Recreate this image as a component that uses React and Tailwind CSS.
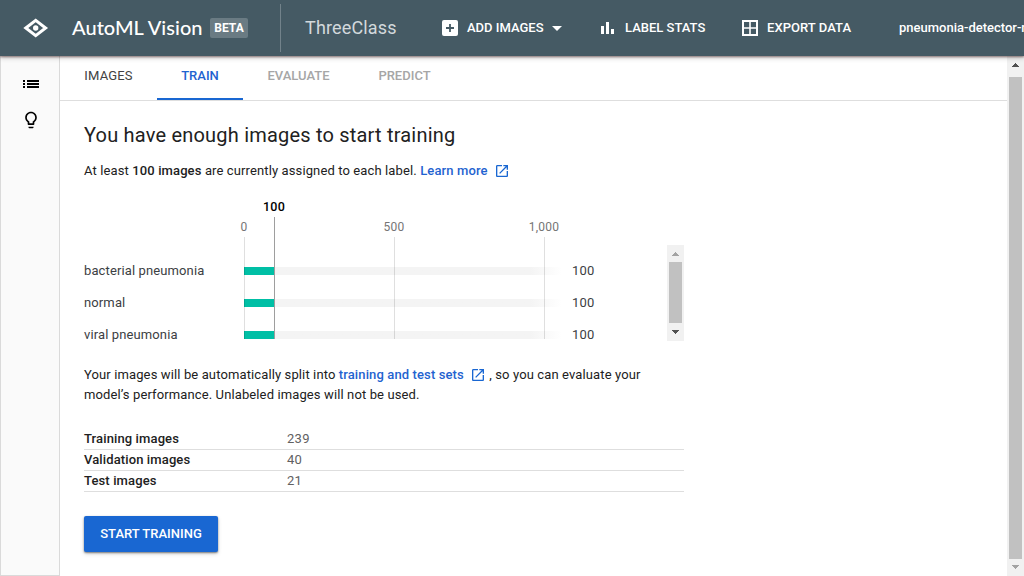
const labels = [
  { name: "bacterial pneumonia", count: "100" },
  { name: "normal", count: "100" },
  { name: "viral pneumonia", count: "100" },
];

const splits = [
  { name: "Training images", count: "239" },
  { name: "Validation images", count: "40" },
  { name: "Test images", count: "21" },
];

function Icon({ d, className }) {
  return (
    <svg viewBox="0 0 24 24" fill="currentColor" className={className}>
      <path d={d} />
    </svg>
  );
}

const OPEN =
  "M19 19H5V5h7V3H5c-1.11 0-2 .9-2 2v14c0 1.1.89 2 2 2h14c1.1 0 2-.9 2-2v-7h-2v7zM14 3v2h3.59l-9.83 9.83 1.41 1.41L19 6.41V10h2V3h-7z";

function Link({ children }) {
  return (
    <a className="font-medium text-[#1f63d0]">
      {children}
      <Icon d={OPEN} className="ml-[6px] inline-block size-4 align-[-4px] text-[#1967d2]" />
    </a>
  );
}

function Arrow({ down, className }) {
  return (
    <svg viewBox="0 0 7 4" fill="currentColor" shapeRendering="crispEdges" className={`h-1 w-[7px] ${className}`}>
      <path d={down ? "M0 0h7v1H6v1H5v1H4v1H3V3H2V2H1V1H0z" : "M3 0h1v1h1v1h1v1h1v1H0V3h1V2h1V1h1z"} />
    </svg>
  );
}

function Header() {
  return (
    <header className="relative z-10 flex h-14 shrink-0 items-center bg-[#455a64] text-white shadow-[0_1px_2px_rgba(60,20,20,0.5),0_2px_5px_rgba(0,0,0,0.2)]">
      <svg viewBox="0 0 26 20" className="ml-[23px] h-5 w-[26px] shrink-0">
        <path d="M2.8 10 12.7 2.4 22.6 10l-9.9 7.6z" fill="none" stroke="currentColor" strokeWidth="3" />
        <circle cx="12.7" cy="10" r="2.7" fill="currentColor" />
      </svg>
      <h1 className="ml-[23px] w-[138px] shrink-0 pb-[2px] font-['Lato'] text-[20px] leading-6 font-medium tracking-[0.03px] whitespace-nowrap">AutoML Vision</h1>
      <span className="flex h-5 w-[38px] shrink-0 items-center justify-center rounded-[2px] bg-[#6a7b83] text-[12px] font-bold">BETA</span>
      <div className="ml-8 h-12 w-px shrink-0 bg-[#72828a]" />
      <span className="ml-6 w-[136px] shrink-0 pb-px text-[18px] tracking-[0.15px] text-[#d3d9dc]">ThreeClass</span>
      <svg viewBox="0 0 16 16" className="ml-px size-4 shrink-0">
        <rect width="16" height="16" rx="2" fill="currentColor" />
        <path d="M4 8h8M8 4v8" stroke="#455a64" strokeWidth="1.8" />
      </svg>
      <span className="ml-[9px] w-[85px] shrink-0 text-[13px] font-medium whitespace-nowrap">ADD IMAGES</span>
      <svg viewBox="0 0 10 5" className="mt-px h-[5px] w-[10px] shrink-0" fill="currentColor">
        <path d="M0 0h10L5 5z" />
      </svg>
      <svg viewBox="0 0 13 12" fill="currentColor" className="ml-[39px] h-3 w-[13px] shrink-0">
        <path d="M0 4h3v8H0zM5 0h3v12H5zM10 7h3v5h-3z" />
      </svg>
      <span className="ml-[11px] w-[117px] shrink-0 text-[13px] font-medium whitespace-nowrap">LABEL STATS</span>
      <svg viewBox="0 0 16 16" className="size-4 shrink-0" fill="none" stroke="currentColor">
        <path d="M1 1h14v14H1z" strokeWidth="2" />
        <path d="M8 1v14M1 8h14" strokeWidth="1.6" />
      </svg>
      <span className="ml-[9px] w-[132px] shrink-0 text-[13px] font-medium tracking-[0.05px] whitespace-nowrap">EXPORT DATA</span>
      <span className="min-w-0 flex-1 overflow-hidden text-[13px] font-medium whitespace-nowrap">pneumonia-detector-ml</span>
    </header>
  );
}

function Chart() {
  return (
    <div className="relative mt-4 h-[146px] w-[600px] text-[12px] leading-5 tracking-[0.2px]">
      <div className="ml-[160px] flex h-5">
        <span className="w-[60px] text-center text-[12.5px] font-medium text-black">100</span>
      </div>
      <div className="ml-[130px] flex h-5 text-[#757575]">
        <span className="w-[60px] text-center">0</span>
        <span className="ml-[90px] w-[60px] text-center">500</span>
        <span className="ml-[90px] w-[60px] text-center">1,000</span>
      </div>
      <div className="mt-2 flex h-[96px] justify-between">
        <div className="flex flex-col pt-[10px]">
          {labels.map((l) => (
            <div key={l.name} className="flex h-8 shrink-0 items-center text-[13px] text-[#3c4043]">
              <span className="w-40 tracking-[0.12px]">{l.name}</span>
              <div className="flex h-2 w-[318px] bg-linear-to-r from-[#f4f4f4] from-90% to-white">
                <div className="w-[30px] bg-[#00bfa5]" />
              </div>
              <span className="ml-[10px]">{l.count}</span>
            </div>
          ))}
        </div>
        <div className="flex w-[17px] flex-col items-center bg-[#f1f1f1]">
          <Arrow className="mt-[7px] text-[#a3a3a3]" />
          <div className="mt-[6px] h-[61px] w-[13px] bg-[#c1c1c1]" />
          <Arrow down className="mt-[7px] text-[#505050]" />
        </div>
      </div>
      <div className="absolute top-10 left-40 h-[102px] w-px bg-[#00000020]" />
      <div className="absolute top-10 left-[310px] h-[102px] w-px bg-[#00000020]" />
      <div className="absolute top-10 left-[460px] h-[102px] w-px bg-[#00000020]" />
      <div className="absolute top-5 left-[190px] h-[122px] w-px bg-[#9e9e9e]" />
    </div>
  );
}

export default function App() {
  return (
    <div className="flex h-[576px] w-[1024px] flex-col overflow-hidden bg-white font-['Roboto',sans-serif] text-[#212121]">
      <Header />
      <div className="flex min-h-0 flex-1">
        <aside className="flex w-[60px] shrink-0 flex-col items-center border-x border-b border-[#dadada] bg-[#fafafa] pt-[18px] text-black">
          <svg viewBox="0 0 16 8" fill="currentColor" shapeRendering="crispEdges" className="mt-[6px] ml-[2px] h-2 w-4">
            <path d="M0 0h2v2H0zM4 0h12v2H4zM0 3h2v2H0zM4 3h12v2H4zM0 6h2v2H0zM4 6h12v2H4z" />
          </svg>
          <Icon
            className="mt-[22px] ml-[2px] size-5"
            d="M9 21c0 .55.45 1 1 1h4c.55 0 1-.45 1-1v-1H9v1zm3-19C8.14 2 5 5.14 5 9c0 2.38 1.19 4.47 3 5.74V17c0 .55.45 1 1 1h6c.55 0 1-.45 1-1v-2.26c1.81-1.27 3-3.36 3-5.74 0-3.86-3.14-7-7-7zm2.85 11.1-.85.6V16h-4v-2.3l-.85-.6C7.8 12.16 7 10.63 7 9c0-2.76 2.24-5 5-5s5 2.24 5 5c0 1.63-.8 3.16-2.15 4.1z"
          />
        </aside>
        <main className="flex min-w-0 flex-1 flex-col">
          <nav className="flex h-[45px] shrink-0 border-b border-[#dedede] text-[13px] leading-5 font-medium">
            <span className="w-[97px] pt-[10px] text-center font-normal tracking-[0.15px] text-[#424242]">IMAGES</span>
            <span className="h-11 w-[86px] border-b-2 border-[#1967d2] pt-[10px] text-center text-[#1f63d0]">TRAIN</span>
            <span className="w-[111px] pt-[10px] text-center text-[#a6a6a6]">EVALUATE</span>
            <span className="w-[101px] pt-[10px] text-center text-[#a6a6a6]">PREDICT</span>
          </nav>
          <section className="flex flex-col items-start pt-5 pl-6 text-[13px] leading-5 tracking-[0.12px]">
            <h2 className="h-7 text-[20px] leading-7 tracking-[0.2px]">You have enough images to start training</h2>
            <p className="mt-3 h-5 whitespace-nowrap">
              At least <b className="font-medium">100 images</b> are currently assigned to each label. <Link>Learn more</Link>
            </p>
            <Chart />
            <p className="mt-[22px] h-10 w-[600px] whitespace-nowrap">
              Your images will be automatically split into <Link>training and test sets</Link> , so you can evaluate your
              <br />
              model’s performance. Unlabeled images will not be used.
            </p>
            <div className="mt-6 w-[600px]">
              {splits.map((s) => (
                <div key={s.name} className="flex h-[21px] border-b border-[#dedede]">
                  <span className="w-[203px] font-medium">{s.name}</span>
                  <span className="tracking-[0.3px] text-[#616161]">{s.count}</span>
                </div>
              ))}
            </div>
            <button className="mt-6 h-9 w-[134px] rounded-[2px] bg-[#1967d2] text-[13px] font-medium tracking-normal text-white shadow-[0_1px_2px_rgba(0,0,0,0.45),0_2px_4px_rgba(0,0,0,0.15)]">
              START TRAINING
            </button>
          </section>
        </main>
        <div className="flex w-[17px] shrink-0 flex-col items-center bg-[#f1f1f1]">
          <Arrow className="mt-[7px] text-[#505050]" />
          <div className="mt-[10px] h-[482px] w-[13px] bg-[#c1c1c1]" />
          <Arrow down className="mt-[6px] text-[#a3a3a3]" />
        </div>
      </div>
    </div>
  );
}
